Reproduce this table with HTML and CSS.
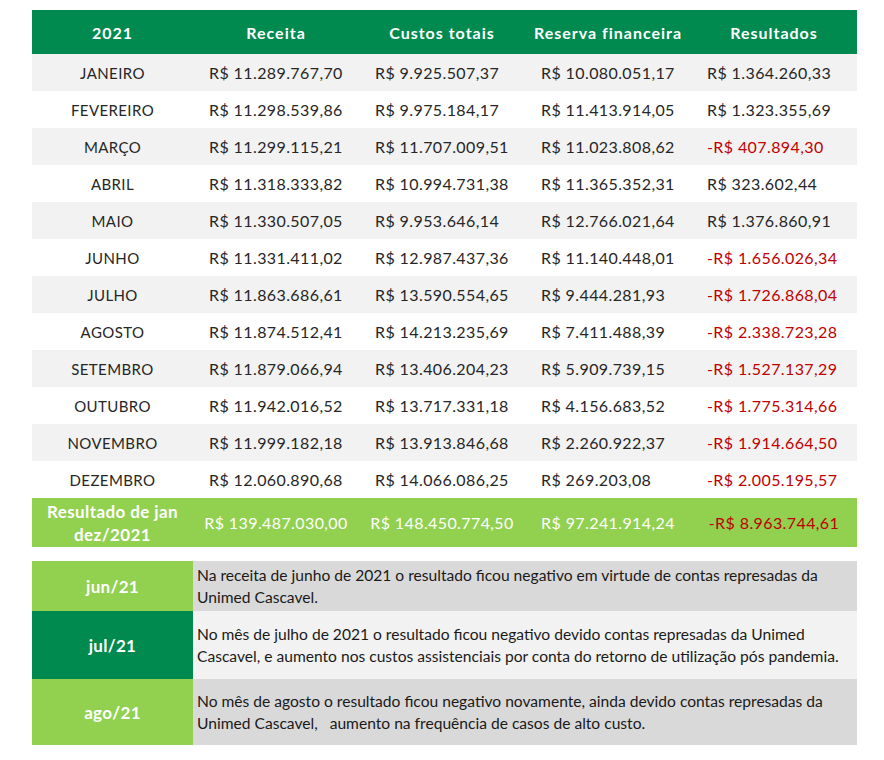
FILE: index.html
```html
<!DOCTYPE html>
<html lang="pt-BR">
<head>
<meta charset="utf-8">
<title>Resultados 2021</title>
<link rel="stylesheet" href="styles.css">
</head>
<body>
<div class="wrap">
  <table class="fin">
    <colgroup>
      <col class="c-month"><col class="c-val"><col class="c-val"><col class="c-val"><col class="c-val">
    </colgroup>
    <thead>
      <tr>
        <th>2021</th><th>Receita</th><th>Custos totais</th><th>Reserva financeira</th><th>Resultados</th>
      </tr>
    </thead>
    <tbody>
      <tr class="odd"><td class="m">JANEIRO</td><td>R$ 11.289.767,70</td><td>R$ 9.925.507,37</td><td>R$ 10.080.051,17</td><td>R$ 1.364.260,33</td></tr>
      <tr><td class="m">FEVEREIRO</td><td>R$ 11.298.539,86</td><td>R$ 9.975.184,17</td><td>R$ 11.413.914,05</td><td>R$ 1.323.355,69</td></tr>
      <tr class="odd"><td class="m">MARÇO</td><td>R$ 11.299.115,21</td><td>R$ 11.707.009,51</td><td>R$ 11.023.808,62</td><td class="neg">-R$ 407.894,30</td></tr>
      <tr><td class="m">ABRIL</td><td>R$ 11.318.333,82</td><td>R$ 10.994.731,38</td><td>R$ 11.365.352,31</td><td>R$ 323.602,44</td></tr>
      <tr class="odd"><td class="m">MAIO</td><td>R$ 11.330.507,05</td><td>R$ 9.953.646,14</td><td>R$ 12.766.021,64</td><td>R$ 1.376.860,91</td></tr>
      <tr><td class="m">JUNHO</td><td>R$ 11.331.411,02</td><td>R$ 12.987.437,36</td><td>R$ 11.140.448,01</td><td class="neg">-R$ 1.656.026,34</td></tr>
      <tr class="odd"><td class="m">JULHO</td><td>R$ 11.863.686,61</td><td>R$ 13.590.554,65</td><td>R$ 9.444.281,93</td><td class="neg">-R$ 1.726.868,04</td></tr>
      <tr><td class="m">AGOSTO</td><td>R$ 11.874.512,41</td><td>R$ 14.213.235,69</td><td>R$ 7.411.488,39</td><td class="neg">-R$ 2.338.723,28</td></tr>
      <tr class="odd"><td class="m">SETEMBRO</td><td>R$ 11.879.066,94</td><td>R$ 13.406.204,23</td><td>R$ 5.909.739,15</td><td class="neg">-R$ 1.527.137,29</td></tr>
      <tr><td class="m">OUTUBRO</td><td>R$ 11.942.016,52</td><td>R$ 13.717.331,18</td><td>R$ 4.156.683,52</td><td class="neg">-R$ 1.775.314,66</td></tr>
      <tr class="odd"><td class="m">NOVEMBRO</td><td>R$ 11.999.182,18</td><td>R$ 13.913.846,68</td><td>R$ 2.260.922,37</td><td class="neg">-R$ 1.914.664,50</td></tr>
      <tr><td class="m">DEZEMBRO</td><td>R$ 12.060.890,68</td><td>R$ 14.066.086,25</td><td>R$ 269.203,08</td><td class="neg">-R$ 2.005.195,57</td></tr>
    </tbody>
    <tfoot>
      <tr>
        <td class="tot-label">Resultado de jan<br>dez/2021</td>
        <td>R$ 139.487.030,00</td><td>R$ 148.450.774,50</td><td>R$ 97.241.914,24</td><td class="neg">-R$ 8.963.744,61</td>
      </tr>
    </tfoot>
  </table>

  <table class="notes">
    <colgroup><col class="c-month"><col class="c-text"></colgroup>
    <tbody>
      <tr class="n-jun">
        <th>jun/21</th>
        <td>Na receita de junho de 2021 o resultado ficou negativo em virtude de contas represadas da<br>Unimed Cascavel.</td>
      </tr>
      <tr class="n-jul">
        <th>jul/21</th>
        <td>No mês de julho de 2021 o resultado ficou negativo devido contas represadas da Unimed<br>Cascavel, e aumento nos custos assistenciais por conta do retorno de utilização pós pandemia.</td>
      </tr>
      <tr class="n-ago">
        <th>ago/21</th>
        <td>No mês de agosto o resultado ficou negativo novamente, ainda devido contas represadas da<br>Unimed Cascavel,&nbsp;&nbsp; aumento na frequência de casos de alto custo.</td>
      </tr>
    </tbody>
  </table>
</div>
</body>
</html>
```

FILE: styles.css
```css
html, body {
  margin: 0;
  padding: 0;
  background: #ffffff;
}

.wrap {
  padding: 10px 0 0 32px;
  display: flex;
  flex-direction: column;
  gap: 14px;
  width: 825px;
}

table {
  border-collapse: collapse;
  table-layout: fixed;
  width: 825px;
}

.c-month { width: 161px; }
.c-val { width: 166px; }
.c-text { width: 664px; }

.fin {
  font-family: Lato, "Open Sans", sans-serif;
  font-size: 16px;
  color: #262626;
}

.fin thead th {
  background: #008a4f;
  color: #ffffff;
  font-weight: bold;
  font-size: 16px;
  height: 44px;
  padding: 0;
  text-align: center;
  letter-spacing: 1px;
}

.fin tbody td {
  height: 37px;
  padding: 0 0 0 16px;
  text-align: left;
  letter-spacing: 0.4px;
  white-space: nowrap;
}

.fin tbody td.m {
  text-align: center;
  padding: 0;
  font-size: 15px;
}

.fin tbody tr.odd td {
  background: #f2f2f2;
}

.fin .neg {
  color: #c00000;
}

.fin tfoot td {
  background: #92d050;
  color: #ffffff;
  height: 49px;
  padding: 0;
  text-align: center;
  font-size: 16px;
  letter-spacing: 0.4px;
  white-space: nowrap;
}

.fin tfoot td.neg {
  color: #c00000;
}

.fin tfoot td.tot-label {
  font-weight: bold;
  font-size: 17px;
  line-height: 23px;
  white-space: normal;
}

.notes {
  font-family: Lato, "Open Sans", sans-serif;
}

.notes th {
  color: #ffffff;
  font-weight: bold;
  font-size: 17px;
  letter-spacing: 0.3px;
  text-align: center;
  padding: 0;
}

.notes td {
  font-size: 15.6px;
  line-height: 22px;
  color: #1a1a1a;
  padding: 0 0 0 4px;
  vertical-align: middle;
  white-space: nowrap;
}

.n-jun { height: 50px; }
.n-jul { height: 68px; }
.n-ago { height: 66px; }

.n-jun th, .n-ago th { background: #92d050; }
.n-jul th { background: #008a4f; }

.n-jun td, .n-ago td { background: #d9d9d9; }
.n-jul td { background: #f2f2f2; }
```
